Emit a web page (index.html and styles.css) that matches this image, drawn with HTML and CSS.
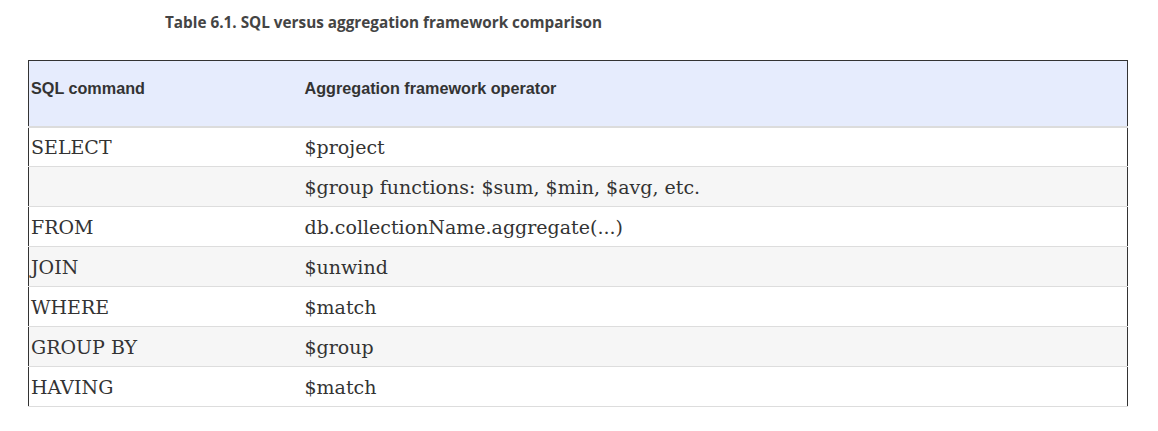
FILE: index.html
```html
<!DOCTYPE html>
<html>
<head>
<meta charset="utf-8">
<link rel="stylesheet" href="styles.css">
</head>
<body>
<div class="caption">Table 6.1. SQL versus aggregation framework comparison</div>
<table class="cmp">
  <thead>
    <tr><th class="c1">SQL command</th><th class="c2">Aggregation framework operator</th></tr>
  </thead>
  <tbody>
    <tr><td>SELECT</td><td>$project</td></tr>
    <tr><td></td><td>$group functions: $sum, $min, $avg, etc.</td></tr>
    <tr><td>FROM</td><td>db.collectionName.aggregate(...)</td></tr>
    <tr><td>JOIN</td><td>$unwind</td></tr>
    <tr><td>WHERE</td><td>$match</td></tr>
    <tr><td>GROUP BY</td><td>$group</td></tr>
    <tr><td>HAVING</td><td>$match</td></tr>
  </tbody>
</table>
</body>
</html>
```
FILE: styles.css
```css
html, body {
  margin: 0;
  padding: 0;
  background: #fff;
}
.caption {
  font-family: "Open Sans", "Lato", sans-serif;
  font-weight: 700;
  font-size: 15.3px;
  line-height: 20px;
  color: #444;
  padding: 12px 0 0 165px;
  height: 60px;
  box-sizing: border-box;
}
.cmp {
  margin-left: 28px;
  width: 1100px;
  border-collapse: collapse;
  border-left: 1px solid #333;
  border-right: 1px solid #333;
  table-layout: fixed;
}
.cmp th {
  background: #e6ecfd;
  border-top: 1px solid #333;
  border-bottom: 2px solid #dcdcdc;
  font-family: "Liberation Sans", Arial, sans-serif;
  font-weight: 700;
  font-size: 16.2px;
  color: #333;
  text-align: left;
  height: 66px;
  padding: 0 2px 10px 2px;
  box-sizing: border-box;
  vertical-align: middle;
}
.cmp th.c1 { width: 274px; }
.cmp td {
  font-family: "DejaVu Serif", Georgia, serif;
  font-size: 19px;
  color: #333;
  height: 40px;
  padding: 0 2px;
  box-sizing: border-box;
  border-bottom: 1px solid #dddddd;
  vertical-align: middle;
}
.cmp tbody tr:nth-child(even) td {
  background: #f6f6f6;
}
```
